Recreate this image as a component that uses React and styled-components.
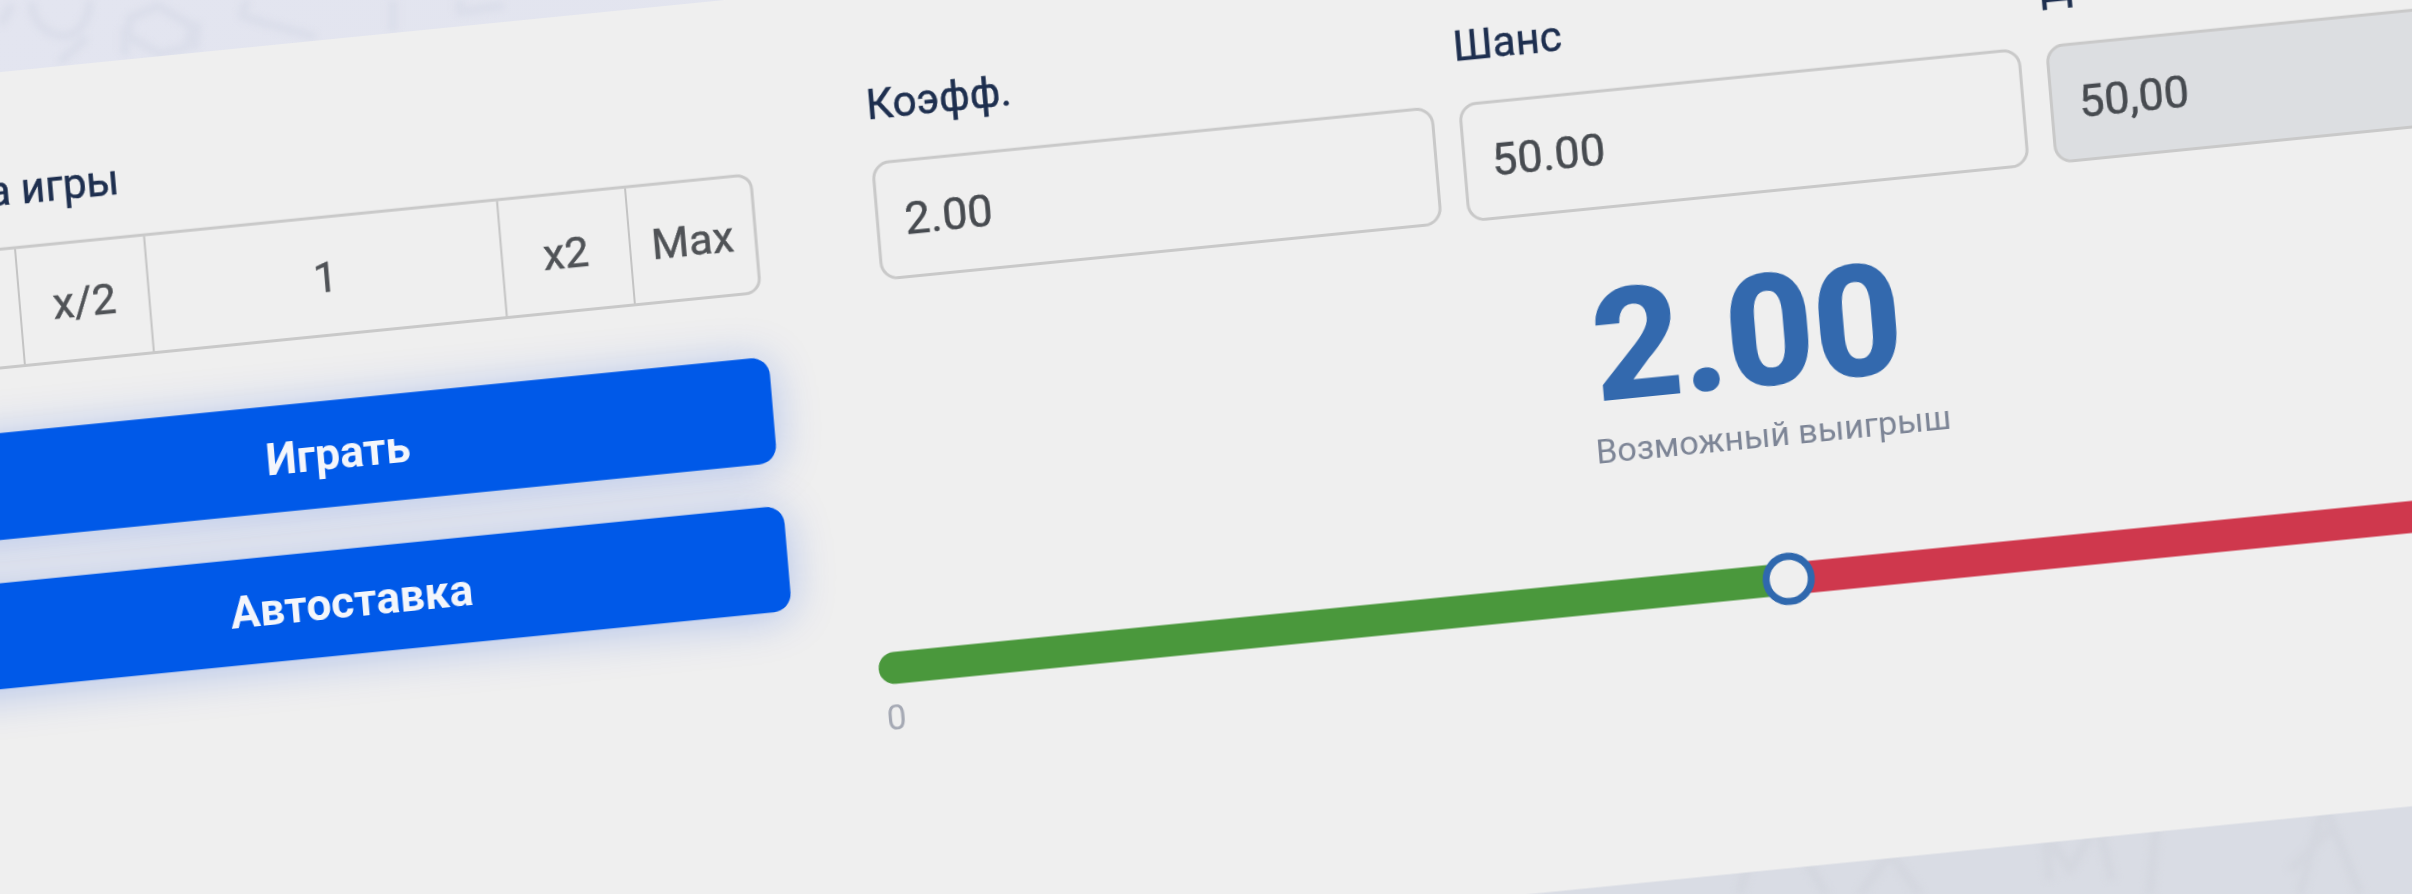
import React from "react";
import styled, { createGlobalStyle } from "styled-components";

const GlobalStyle = createGlobalStyle`
  html, body {
    margin: 0;
    padding: 0;
    background: #e2e4ee;
    overflow: hidden;
  }
`;

const Stage = styled.div`
  position: relative;
  width: 2412px;
  height: 894px;
  overflow: hidden;
  background: linear-gradient(150deg, #e3e5f0 0%, #e2e4ed 45%, #d9dce4 75%);
  font-family: Roboto, "Liberation Sans", sans-serif;
`;

const Pattern = styled.svg`
  position: absolute;
  inset: 0;
  width: 100%;
  height: 100%;
  filter: blur(3px);
`;

/* the whole card is photographed at an angle */
const Panel = styled.div`
  position: absolute;
  left: 0;
  top: 0;
  box-sizing: border-box;
  display: flex;
  gap: 118px;
  width: 2900px;
  height: 966px;
  padding: 93px 0 0 68px;
  background: #efefef;
  transform-origin: 0 0;
  transform: matrix(1, -0.0995, 0.085, 1, -200, 92);
  filter: blur(0.5px);
`;

const LeftColumn = styled.div`
  display: flex;
  flex-direction: column;
  width: 870px;
`;

const RightColumn = styled.div`
  display: flex;
  flex-direction: column;
  align-items: center;
  width: 1736px;
`;

const Label = styled.div`
  height: 52px;
  margin-bottom: 30px;
  font-size: 42px;
  line-height: 52px;
  color: #1e2f4f;
  -webkit-text-stroke: 0.5px #1e2f4f;
  white-space: nowrap;
`;

const BetRow = styled.div`
  display: grid;
  grid-template-columns: 128px 129px 353px 128px 1fr;
  box-sizing: border-box;
  height: 121px;
  margin: -1px 1px 63px 0;
  border: 3px solid #c9c9c9;
  border-radius: 16px;
`;

const BetCell = styled.div`
  display: flex;
  align-items: center;
  justify-content: center;
  font-size: 43px;
  color: #505357;
  -webkit-text-stroke: 0.5px #505357;
  & + & {
    border-left: 2px solid #c4c4c4;
  }
`;

const PlayButton = styled.div`
  display: flex;
  align-items: center;
  justify-content: center;
  height: ${(p) => p.$height}px;
  margin: 0 ${(p) => p.$overhang || 0}px 43px 0;
  border-radius: 18px;
  background: #0059e8;
  box-shadow: 0 4px 44px rgba(0, 70, 225, 0.26);
  color: #f4f6fb;
  font-size: 44px;
  font-weight: 700;
`;

const Fields = styled.div`
  display: grid;
  grid-template-columns: repeat(3, 1fr);
  gap: 25px;
  width: 100%;
`;

const Field = styled.div`
  display: flex;
  flex-direction: column;
`;

const Input = styled.div`
  display: flex;
  align-items: center;
  box-sizing: border-box;
  height: 119px;
  padding-left: 26px;
  border: 3px solid #c9c9c9;
  border-radius: 18px;
  background: ${(p) => (p.$disabled ? "#dcdee1" : "transparent")};
  color: #474b50;
  -webkit-text-stroke: 0.5px #474b50;
  font-size: 45px;
`;

const BigValue = styled.div`
  margin: 60px 28px 0 0;
  font-size: 155px;
  line-height: 1;
  font-weight: 800;
  letter-spacing: -1.5px;
  color: #3369ae;
`;

const Caption = styled.div`
  margin: 5px 0 0 8px;
  font-size: 34px;
  line-height: 40px;
  color: #7d8596;
`;

const Slider = styled.div`
  align-self: stretch;
  margin: 109px -49px 0 -35px;
`;

const Track = styled.div`
  position: relative;
  display: flex;
  height: 32px;
`;

const Segment = styled.div`
  flex: 1;
  background: ${(p) => p.$color};
  border-radius: ${(p) => (p.$start ? "16px 0 0 16px" : "0 16px 16px 0")};
`;

const Knob = styled.div`
  position: absolute;
  left: 50%;
  top: 50%;
  box-sizing: border-box;
  width: 52px;
  height: 52px;
  margin: -26px 0 0 -26px;
  border: 7px solid #2f68ae;
  border-radius: 50%;
  background: #efefef;
`;

const Scale = styled.div`
  margin: 13px 0 0 4px;
  font-size: 35px;
  line-height: 42px;
  color: #a5a9b4;
`;

const BackgroundShapes = () => (
  <Pattern viewBox="0 0 2412 894">
    <g fill="none" stroke="#dbdeea" strokeWidth="9" strokeLinejoin="round" strokeLinecap="round">
      <path d="M32 6c2 20 20 30 32 30 14 0 24-14 26-34" />
      <path d="M10 8l-8 14M84 40L62 60" />
      <path d="M158 6l34 20-6 22-26 6-32-18 2-18z" />
      <path d="M125 30v22M197 26l-2 20" />
      <path d="M246 2l-4 14 26 8 44 12" />
      <path d="M393 -2v30M460 -2v14l40 -6" />
    </g>
    <g fill="none" stroke="#d4d7df" strokeWidth="9" strokeLinejoin="round">
      <path d="M1740 894l10-40M1800 850l26 44M1860 894l30-40 30 40" />
      <path d="M2050 880l-6-50 26 40 28-50 14 60" />
      <path d="M2150 894l6-70" />
      <path d="M2300 894l24-90 36 90M2330 830l-40 40" />
    </g>
  </Pattern>
);

const fields = [
  { label: "Коэфф.", value: "2.00" },
  { label: "Шанс", value: "50.00" },
  { label: "Доход", value: "50,00", disabled: true },
];

const betCells = ["Min", "x/2", "1", "x2", "Max"];

const App = () => (
  <Stage>
    <GlobalStyle />
    <BackgroundShapes />
    <Panel>
      <LeftColumn>
        <Label>Сумма игры</Label>
        <BetRow>
          {betCells.map((cell) => (
            <BetCell key={cell}>{cell}</BetCell>
          ))}
        </BetRow>
        <PlayButton $height={106}>Играть</PlayButton>
        <PlayButton $height={105} $overhang={-2}>Автоставка</PlayButton>
      </LeftColumn>
      <RightColumn>
        <Fields>
          {fields.map((field) => (
            <Field key={field.label}>
              <Label>{field.label}</Label>
              <Input $disabled={field.disabled}>{field.value}</Input>
            </Field>
          ))}
        </Fields>
        <BigValue>2.00</BigValue>
        <Caption>Возможный выигрыш</Caption>
        <Slider>
          <Track>
            <Segment $color="#4a983c" $start />
            <Segment $color="#cf384d" />
            <Knob />
          </Track>
          <Scale>0</Scale>
        </Slider>
      </RightColumn>
    </Panel>
  </Stage>
);

export default App;
